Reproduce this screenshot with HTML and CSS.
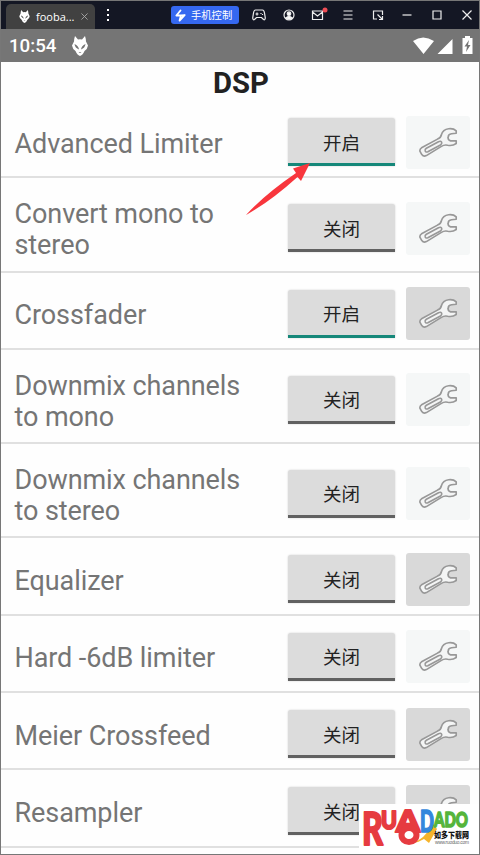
FILE: index.html
```
<!DOCTYPE html>
<html lang="zh-CN">
<head>
<meta charset="utf-8">
<title>DSP</title>
<link rel="stylesheet" href="styles.css">
</head>
<body>
<svg width="0" height="0" class="defs">
  <symbol id="alien" viewBox="0 0 16 20"><path fill="currentColor" fill-rule="evenodd" d="M3 0 6 3.500Q8 3 10 3.500L13 0Q14 3 14 5.500L16 9.500Q15.500 13 12.500 15Q11 19 8 20Q5 19 3.500 15Q.5 13 0 9.500L2 5.500Q2 3 3 0ZM2.500 8Q3 12 7 13.500Q6.500 9.500 2.500 8ZM13.500 8Q9.500 9.500 9 13.500Q13 12 13.500 8ZM6.500 16 8 17 9.500 16Z"/></symbol>
  <symbol id="wrench" viewBox="0 0 40 32"><path fill="#f4f5f5" stroke="#989898" stroke-width="1.700" stroke-linejoin="round" d="M3 21.500 19.500 12.500Q23 11 23.500 8Q25 2.500 31 1.800Q36 1.200 38.800 4V6.500L34 7Q30.500 7.500 30.500 10.500Q30 13.500 33 14.300L38.800 14.300V17Q35 19.800 30 18.800Q26.500 18 23.500 20L8 29.500Q4.500 31 3 28L1.300 25Q1 22.800 3 21.500Z"/><path fill="#f4f5f5" stroke="#989898" stroke-width="1.700" stroke-linejoin="round" d="M8 22 20.500 15.200Q23 14 23.800 15.800Q24.300 17.500 22.500 18.500L9.500 25.500Q7.500 26.500 6.800 24.700Q6.300 23 8 22Z"/></symbol>
</svg>
<div class="window">
  <header class="titlebar">
    <div class="tab"><svg class="tab-logo"><use href="#alien"/></svg><span>fooba...</span><svg class="tab-close" viewBox="0 0 8 8"><path d="M.5.5 7.500 7.500M7.500.5.5 7.500"/></svg></div>
    <div class="dots"><i></i><i></i><i></i></div>
    <div class="control"><svg viewBox="0 0 12 13"><path fill="none" stroke="#fff" stroke-width="2" stroke-linejoin="round" stroke-linecap="round" d="M6 1 1.500 6.500H6.500L10.500 6 5 12 6.500 6.500"/></svg><span>手机控制</span></div>
    <div class="tools">
      <svg viewBox="0 0 14 14"><path d="M3.500 2H10.500Q12 2 12.500 5L13.300 10Q13 12.500 11.500 11.500L9.500 9.500H4.500L2.500 11.500Q1 12.500.7 10L1.500 5Q2 2 3.500 2ZM3.500 6H6.500M5 4.500V7.500M9 5V6M10.500 6V7"/></svg>
      <svg viewBox="0 0 14 14"><circle cx="7" cy="7" r="5"/><circle cx="7" cy="5.700" r="1.800" fill="#fff"/><path fill="#fff" d="M3.800 10Q7 7 10.200 10Q7 12.500 3.800 10Z"/></svg>
      <svg viewBox="0 0 14 14"><path d="M1.500 3H11.500V11.500H1.500ZM1.500 4 6.500 8 11.500 4"/><circle class="alert" cx="14" cy="2" r="2.500"/></svg>
      <svg viewBox="0 0 14 14"><path d="M2.500 3H11.500M2.500 7H11.500M2.500 11H11.500"/></svg>
      <svg viewBox="0 0 14 14"><path d="M6 11H2.500V3H11.500V7M6.500 6.500 11 11M11.500 8V11.500H8"/></svg>
      <svg viewBox="0 0 14 14"><path d="M2.500 7H11.500"/></svg>
      <svg viewBox="0 0 14 14"><path d="M3 3H11V11H3Z"/></svg>
      <svg viewBox="0 0 14 14"><path d="M2.500 2.500 11.500 11.500M11.500 2.500 2.500 11.500"/></svg>
    </div>
  </header>
  <div class="statusbar">
    <span class="time">10:54</span><svg class="status-logo"><use href="#alien"/></svg>
    <svg class="signals" viewBox="0 0 62 20"><path fill="#fff" d="M0 5Q10-2 21 5L10.500 18ZM39.500 3V18H24.500Z"/><path fill="#fff" fill-rule="evenodd" d="M52 2V0H57V2H59.500V18H49.500V2ZM56 4 51.500 10.500H54L53 16 57.500 9H55Z"/></svg>
  </div>
  <h1>DSP</h1>
  <main>
    <div class="row"><span class="name">Advanced Limiter</span><button class="toggle on">开启</button><button class="config"><svg><use href="#wrench"/></svg></button></div>
    <div class="row tall"><span class="name">Convert mono to stereo</span><button class="toggle">关闭</button><button class="config"><svg><use href="#wrench"/></svg></button></div>
    <div class="row"><span class="name">Crossfader</span><button class="toggle on">开启</button><button class="config enabled"><svg><use href="#wrench"/></svg></button></div>
    <div class="row tall"><span class="name">Downmix channels to mono</span><button class="toggle">关闭</button><button class="config"><svg><use href="#wrench"/></svg></button></div>
    <div class="row tall"><span class="name">Downmix channels to stereo</span><button class="toggle">关闭</button><button class="config"><svg><use href="#wrench"/></svg></button></div>
    <div class="row"><span class="name">Equalizer</span><button class="toggle">关闭</button><button class="config enabled"><svg><use href="#wrench"/></svg></button></div>
    <div class="row"><span class="name">Hard -6dB limiter</span><button class="toggle">关闭</button><button class="config"><svg><use href="#wrench"/></svg></button></div>
    <div class="row"><span class="name">Meier Crossfeed</span><button class="toggle">关闭</button><button class="config enabled"><svg><use href="#wrench"/></svg></button></div>
    <div class="row"><span class="name">Resampler</span><button class="toggle">关闭</button><button class="config enabled"><svg><use href="#wrench"/></svg></button></div>
  </main>
  <svg class="arrow" viewBox="0 0 66 54"><path fill="#f8363d" d="M0 52Q18 32 50 10L47 5.500 64 0 55 18 51.500 14Q25 38 1 51.500Z"/></svg>
  <svg class="watermark" viewBox="0 0 121 51">
    <g class="brand" fill="#e63b40" stroke="#e63b40" stroke-width="2"><text x="3" y="41" font-size="46" textLength="21" lengthAdjust="spacingAndGlyphs">R</text><text x="22" y="25" font-size="25" textLength="16" lengthAdjust="spacingAndGlyphs">U</text><text x="37" y="28" font-size="30" textLength="24" lengthAdjust="spacingAndGlyphs">A</text></g>
    <path fill="#f6b42c" d="M53 39Q65 36 74 20L78 25 70 39 65 35 59 38Z"/>
    <ellipse cx="50" cy="31" rx="7.500" ry="7" fill="#fff" stroke="#e63b40" stroke-width="6"/>
    <g class="brand" stroke-width="1.500"><text x="61" y="28" font-size="30" fill="#3487dc" stroke="#3487dc" textLength="14" lengthAdjust="spacingAndGlyphs">D</text><text x="75" y="22.500" font-size="20" fill="#55b53b" stroke="#55b53b" textLength="34" lengthAdjust="spacingAndGlyphs">ADO</text></g>
    <text class="cn" x="75" y="34" font-size="8.500" textLength="35" lengthAdjust="spacingAndGlyphs">如多下载网</text>
    <text class="url" x="76" y="39.500" font-size="4.800" textLength="34">www.ruoduo.com</text>
  </svg>
</div>
</body>
</html>
```
FILE: styles.css
```
* { box-sizing: border-box; }
body { margin: 0; font-family: Roboto, "Noto Sans CJK SC", sans-serif; }
.defs { position: absolute; }
.window { position: relative; width: 480px; height: 855px; overflow: hidden; border: 1px solid #777; background: #fefefe; }
.titlebar { height: 28px; display: flex; align-items: center; background: #141724; color: #fff; }
.tab { align-self: flex-end; width: 89px; height: 25px; margin-left: 5px; padding-left: 13px; display: flex; align-items: center; background: #414141; border-radius: 5px 5px 0 0; font: 11px "Open Sans", sans-serif; }
.tab-logo { width: 11px; height: 13px; margin-right: 6px; }
.tab-close { width: 7px; height: 7px; margin-left: 7px; fill: none; stroke: #aaa; }
.dots { width: 3px; margin-left: 12px; display: grid; gap: 3px; }
.dots i { width: 2px; height: 2px; background: #fff; }
.control { width: 68px; height: 18px; margin-left: 61px; padding-left: 4px; display: flex; align-items: center; gap: 5px; border-radius: 3px; background: #3568f0; font: 10.300px "Noto Sans CJK SC", sans-serif; white-space: nowrap; }
.control span { position: relative; top: -1px; }
.control svg { width: 11px; height: 13px; flex: none; }
.tools { display: flex; gap: 15.700px; margin-left: 13px; }
.tools svg { width: 14px; height: 14px; overflow: visible; fill: none; stroke: #eee; stroke-width: 1.200; }
.tools .alert { fill: #ee4d55; stroke: none; }
.statusbar { height: 33px; display: flex; align-items: center; padding: 0 5px 0 8px; background: #757575; color: #fff; }
.time { width: 48px; padding-top: 1px; font-size: 18.700px; font-weight: 500; }
.status-logo { width: 16px; height: 20px; margin-left: 15px; }
.signals { width: 62px; height: 20px; margin-left: auto; margin-right: -1px; }
h1 { height: 39.200px; margin: 0; padding: 4px 0 0 2px; color: #222; text-align: center; font-size: 29.300px; line-height: 34px; font-weight: 700; }
.row { height: 77.300px; display: flex; align-items: center; padding: 7px 9px 0 13.500px; border-bottom: 2px solid #e0e0e0; }
.row.tall { height: 94.200px; }
.name { width: 240px; margin-right: auto; padding-top: 4px; color: #757575; font-size: 27px; line-height: 31px; letter-spacing: -.08px; }
button { border: 0; padding: 0; font-family: inherit; }
.toggle { width: 107px; height: 48px; margin-right: 11px; padding-top: 2px; border-bottom: 3px solid #616161; border-radius: 3px 3px 0 0; background: #dcdcdc; color: #222; font: 18.500px "Noto Sans CJK SC", sans-serif; box-shadow: 0 0 2px #ccc; }
.toggle.on { border-bottom-color: #158779; }
.config { width: 64px; height: 53px; display: grid; place-items: center; border-radius: 3px; background: #f5f7f7; }
.config.enabled { background: #d9d9d9; }
.config svg { width: 40px; height: 31px; }
.arrow { position: absolute; left: 245px; top: 162px; width: 66px; height: 54px; }
.watermark { position: absolute; left: 358px; top: 803px; width: 121px; height: 51px; background: #fff; }
.brand { font-family: Lato, sans-serif; font-weight: 900; stroke-linejoin: round; }
.cn { font-family: "Noto Sans CJK SC", sans-serif; font-weight: 900; fill: #111; }
.url { font-family: "Liberation Sans", sans-serif; fill: #666; }
```
